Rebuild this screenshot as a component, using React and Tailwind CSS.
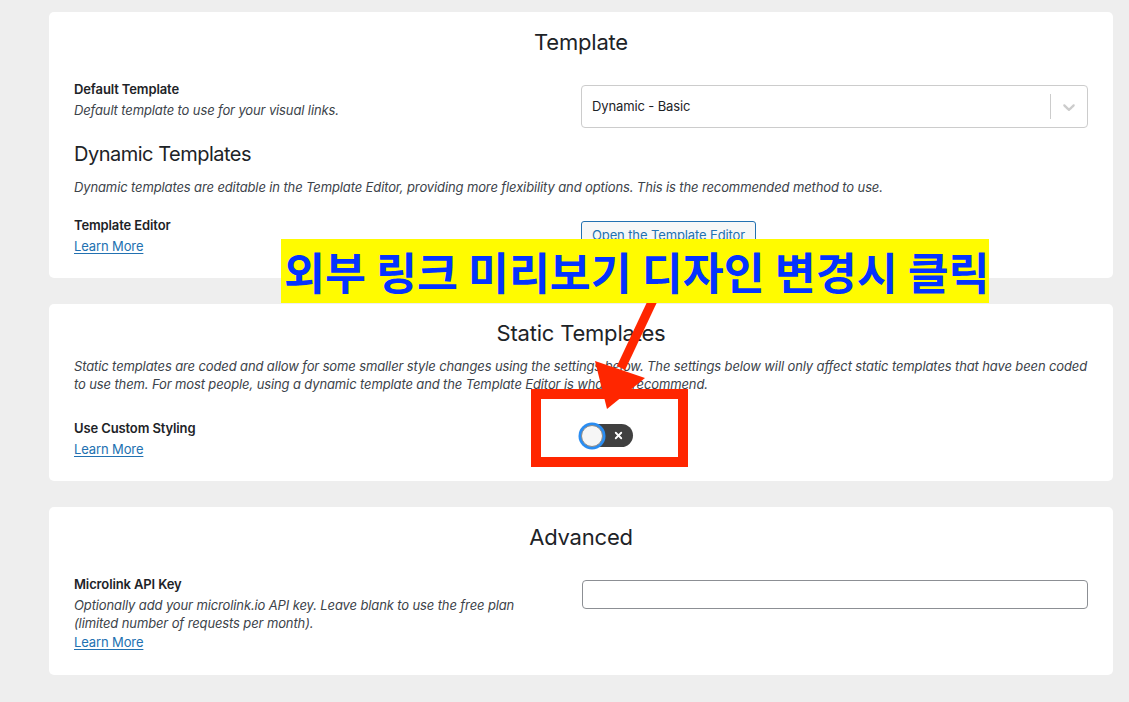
import { X } from "lucide-react";

const font = "font-['Inter','Noto_Sans',sans-serif]";

function Label({ children }) {
  return <div className="text-[13px] leading-[20px] font-semibold tracking-[-0.12px] text-[#1d2327]">{children}</div>;
}

function LearnMore({ className = "" }) {
  return (
    <div className={className}>
      <a href="#" className="text-[13px] tracking-[-0.12px] text-[#2271b1] underline underline-offset-[2px]">
        Learn More
      </a>
    </div>
  );
}

function Card({ title, className = "", children }) {
  return (
    <div className={"rounded-[5px] bg-white px-[25px] " + className}>
      <h2 className="text-center text-[22px] leading-[28px] font-normal tracking-[-0.2px] text-[#1d2327]">{title}</h2>
      {children}
    </div>
  );
}

function Chevron() {
  return (
    <svg width="20" height="20" viewBox="0 0 20 20" fill="#cccccc">
      <path d="M4.516 7.548c0.436-0.446 1.043-0.481 1.576 0l3.908 3.747 3.908-3.747c0.533-0.481 1.141-0.446 1.574 0 0.436 0.445 0.408 1.197 0 1.615-0.406 0.418-4.695 4.502-4.695 4.502-0.217 0.223-0.502 0.335-0.787 0.335s-0.57-0.112-0.789-0.335c0 0-4.287-4.084-4.695-4.502s-0.436-1.17 0-1.615z" />
    </svg>
  );
}

const desc = "text-[13px] leading-[18px] italic tracking-[-0.12px] text-[#3c434a]";

export default function App() {
  return (
    <div className={"relative min-h-screen bg-[#eeeeee] pl-[49px] pr-[16px] pt-[12px] pb-[28px] " + font}>
      <Card title="Template" className="pt-[16px] pb-[22px]">
        <div className="mt-[23px] grid grid-cols-2">
          <div>
            <Label>Default Template</Label>
            <div className={"mt-[2px] " + desc}>Default template to use for your visual links.</div>
          </div>
          <div className="mt-[6px] flex h-[43px] items-center rounded-[4px] border border-[#cccccc] bg-white">
            <div className="flex-1 pl-[10px] pt-px text-[13px] tracking-[-0.12px] text-[#1d2327]">Dynamic - Basic</div>
            <div className="h-[25px] w-px bg-[#cccccc]" />
            <div className="flex w-[36px] justify-center">
              <Chevron />
            </div>
          </div>
        </div>

        <h3 className="mt-[13px] text-[20px] leading-[26px] font-normal tracking-[-0.5px] text-[#1d2327]">Dynamic Templates</h3>
        <p className={"mt-[11px] " + desc}>
          Dynamic templates are editable in the Template Editor, providing more flexibility and options. This is the recommended method to use.
        </p>

        <div className="mt-[19px] grid grid-cols-2">
          <div>
            <Label>Template Editor</Label>
            <LearnMore className="leading-[20px]" />
          </div>
          <div className="mt-[6px]">
            <button className="h-[30px] rounded-[3px] border border-[#2271b1] bg-[#f6f7f7] px-[10px] text-[13px] tracking-[-0.12px] text-[#2271b1]">
              Open the Template Editor
            </button>
          </div>
        </div>
      </Card>

      <Card title="Static Templates" className="mt-[26px] pt-[15px] pb-[22px]">
        <p className={"mt-[10px] whitespace-nowrap " + desc}>
          Static templates are coded and allow for some smaller style changes using the settings below. The settings below will only affect static templates that have been coded
          <br />
          to use them. For most people, using a dynamic template and the Template Editor is what we recommend.
        </p>
        <div className="mt-[25px] grid grid-cols-2">
          <div>
            <Label>Use Custom Styling</Label>
            <LearnMore className="leading-[20px]" />
          </div>
          <div className="mt-[6px] pl-px">
            <div className="flex h-[23px] w-[51px] items-center rounded-full bg-[#404040]">
              <div className="-ml-px h-[22px] w-[22px] rounded-full border border-[#8a8a8a] bg-[#f6f6f6] ring-[2.5px] ring-[#2a8df2]" />
              <div className="flex flex-1 justify-center">
                <X size={11} strokeWidth={4} color="#ffffff" />
              </div>
            </div>
          </div>
        </div>
      </Card>

      <Card title="Advanced" className="mt-[26px] pt-[16px] pb-[24px]">
        <div className="mt-[23px] grid grid-cols-2">
          <div>
            <Label>Microlink API Key</Label>
            <div className={"mt-[2px] whitespace-nowrap " + desc}>
              Optionally add your microlink.io API key. Leave blank to use the free plan
              <br />
              (limited number of requests per month).
            </div>
            <LearnMore className="leading-[18px]" />
          </div>
          <div className="mt-[6px] pl-px">
            <input className="h-[29px] w-full rounded-[4px] border border-[#8c8f94] bg-white px-2 text-[13px]" />
          </div>
        </div>
      </Card>

      {/* annotation overlay */}
      <svg className="pointer-events-none absolute left-0 top-0" width="1129" height="702">
        <line x1="653" y1="300" x2="621" y2="368" stroke="#ff2600" strokeWidth="9" />
        <polygon points="595,361 645,378 607,409" fill="#ff2600" />
      </svg>
      <div className="pointer-events-none absolute left-[531px] top-[389px] h-[78px] w-[157px] border-[10px] border-[#ff2600]" />
      <div className="absolute left-[281px] top-[239px] flex h-[64px] w-[708px] items-center bg-[#fffb00] pl-[3px]">
        <span className="font-['Noto_Sans_CJK_KR',sans-serif] text-[44.5px] leading-none font-bold text-[#0433ff] whitespace-nowrap">
          외부 링크 미리보기 디자인 변경시 클릭
        </span>
      </div>
    </div>
  );
}
